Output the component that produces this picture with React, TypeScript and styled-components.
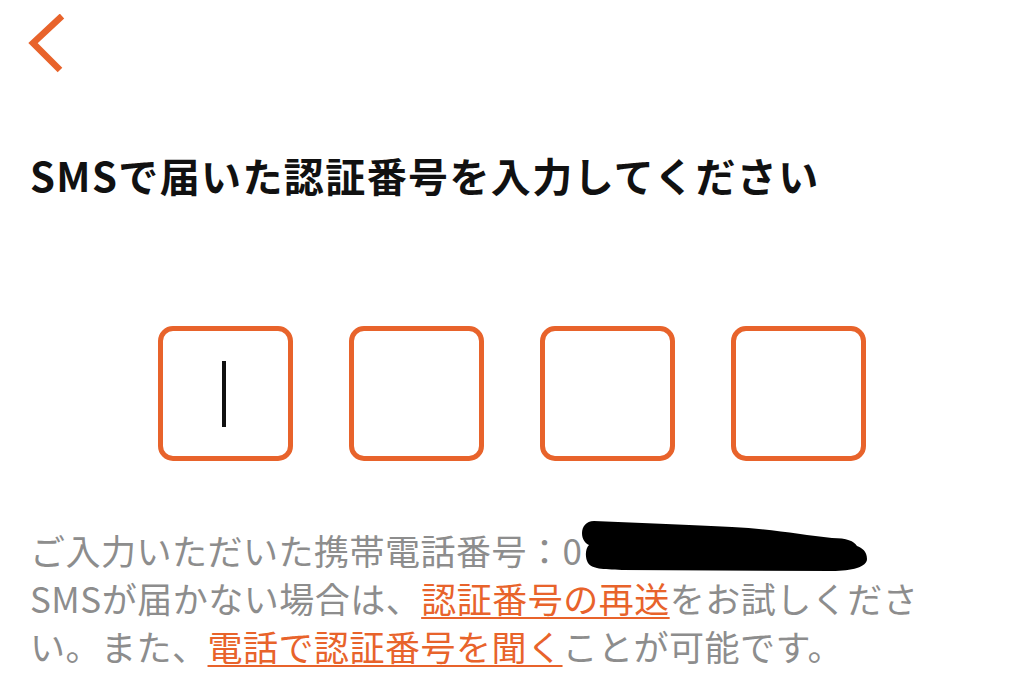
import styled, { createGlobalStyle } from "styled-components";

const ORANGE = "#e8632b";

const Global = createGlobalStyle`
  html, body { margin: 0; padding: 0; background: #fff; }
  body { font-family: "Noto Sans CJK JP", "Noto Sans", sans-serif; }
`;

const Page = styled.main`
  width: 1024px; height: 694px; overflow: hidden;
  background: #fff;
  display: flex; flex-direction: column;
`;

const Header = styled.header`
  height: 86px;
  padding: 14px 0 0 27px;
  box-sizing: border-box;
`;

const BackButton = styled.button`
  border: 0; background: none; padding: 0; cursor: pointer;
  width: 40px; height: 60px; display: block;
`;

const Title = styled.h1`
  margin: 65px 0 0; padding: 0 30px;
  font-size: 40px; line-height: 48px; font-weight: 700;
  letter-spacing: 1.4px; color: #111;
`;

const CodeRow = styled.div`
  margin-top: 127px;
  display: flex; justify-content: center; gap: 56px;
`;

const CodeCell = styled.div`
  width: 135px; height: 135px; box-sizing: border-box;
  border: 5px solid ${ORANGE}; border-radius: 15px;
  display: flex; align-items: center; justify-content: center;
`;

const Caret = styled.span`
  width: 4px; height: 66px; background: #111; margin-left: -4px;
`;

const Note = styled.p`
  margin: 65px 0 0; padding: 0 30px; width: 905px;
  font-size: 35px; line-height: 48px; letter-spacing: 0.5px;
  color: #8d8d8d;
`;

const Link = styled.a`
  color: ${ORANGE};
  text-decoration: underline;
  text-decoration-thickness: 2px;
  text-underline-offset: 4px;
`;

const Masked = styled.span`
  position: relative; display: inline-block; width: 0;
`;

const Redaction = styled.svg`
  position: absolute; left: 0; top: -44px;
`;

function BackIcon() {
  return (
    <svg width="40" height="60" viewBox="0 0 40 60">
      <polyline points="35,2 6,29 33,56" fill="none" stroke={ORANGE} strokeWidth="6.5" strokeLinejoin="miter" />
    </svg>
  );
}

export default function App() {
  return (
    <>
      <Global />
      <Page>
        <Header>
          <BackButton aria-label="戻る"><BackIcon /></BackButton>
        </Header>
        <Title>SMSで届いた認証番号を入力してください</Title>
        <CodeRow>
          <CodeCell><Caret /></CodeCell>
          <CodeCell />
          <CodeCell />
          <CodeCell />
        </CodeRow>
        <Note>
          ご入力いただいた携帯電話番号：0
          <Masked>
            <Redaction width="286" height="51" viewBox="0 0 286 51">
              <path
                d="M12 0 C4 0 0 6 0 12 C0 18 3 22 7 24 C3 28 3 37 6 42 C10 48 20 48 40 49 L250 50 C270 50 285 46 285 38 C285 30 280 27 275 25 C272 20 265 17 250 17 C220 14 190 8 150 6 C110 4 60 2 12 0 Z"
                fill="#000"
              />
            </Redaction>
          </Masked>
          <br />
          SMSが届かない場合は、<Link>認証番号の再送</Link>をお試しください。また、<Link>電話で認証番号を聞く</Link>ことが可能です。
        </Note>
      </Page>
    </>
  );
}
